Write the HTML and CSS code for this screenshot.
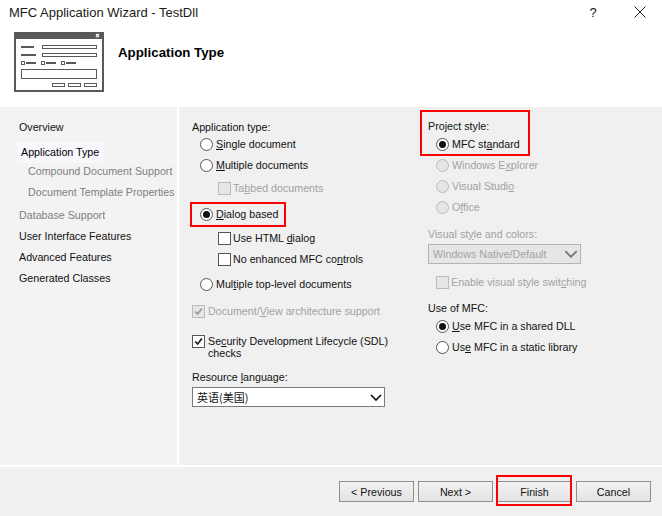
FILE: index.html
```html
<!DOCTYPE html>
<html lang="en">
<head>
<meta charset="utf-8">
<title>MFC Application Wizard - TestDll</title>
<link rel="stylesheet" href="styles.css">
</head>
<body>
<div class="window">
  <div class="titlebar">
    <span class="title">MFC Application Wizard - TestDll</span>
    <span class="help">?</span>
    <svg class="close" viewBox="0 0 12 12" width="12" height="12"><path d="M.5.5l11 11M11.5.5l-11 11" stroke="#222" fill="none"/></svg>
  </div>
  <div class="header">
    <svg class="logo" viewBox="0 0 90 60" width="90" height="60">
      <rect x="1" y="1" width="88" height="58" fill="#fff" stroke="#595959" stroke-width="2"/>
      <rect x="0" y="0" width="90" height="7" fill="#595959"/>
      <path d="M82 2l3 3M85 2l-3 3" stroke="#fff" stroke-width="1.2"/>
      <g fill="#595959">
        <rect x="7" y="14" width="13" height="2"/>
        <rect x="7" y="22" width="15" height="2"/>
        <rect x="12" y="30" width="10" height="2"/>
        <rect x="32" y="30" width="10" height="2"/>
        <rect x="52" y="30" width="10" height="2"/>
      </g>
      <g fill="none" stroke="#595959">
        <rect x="28.5" y="13.5" width="54" height="3"/>
        <rect x="28.5" y="21.5" width="54" height="3"/>
        <rect x="7.5" y="29.5" width="3" height="3"/>
        <rect x="27.5" y="29.5" width="3" height="3"/>
        <rect x="47.5" y="29.5" width="3" height="3"/>
        <rect x="7.5" y="37.5" width="75" height="9"/>
        <rect x="38.5" y="51.5" width="12" height="3"/>
        <rect x="54.5" y="51.5" width="12" height="3"/>
        <rect x="70.5" y="51.5" width="12" height="3"/>
      </g>
    </svg>
    <h1 class="heading">Application Type</h1>
  </div>
  <div class="middle">
    <nav class="sidebar">
      <div class="nav-item nav-overview">Overview</div>
      <div class="nav-item nav-current">Application Type</div>
      <div class="nav-item nav-sub">Compound Document Support</div>
      <div class="nav-item nav-sub nav-sub2">Document Template Properties</div>
      <div class="nav-item nav-dim nav-db">Database Support</div>
      <div class="nav-item nav-next">User Interface Features</div>
      <div class="nav-item nav-next">Advanced Features</div>
      <div class="nav-item nav-next">Generated Classes</div>
    </nav>
    <main class="main">
      <section class="col col-left">
        <div class="row"><span>Application type:</span></div>
        <div class="row opt mt1"><i class="radio"></i><span><u>S</u>ingle document</span></div>
        <div class="row opt mt5"><i class="radio"></i><span><u>M</u>ultiple documents</span></div>
        <div class="row sub off mt7"><i class="check"></i><span>Ta<u>b</u>bed documents</span></div>
        <div class="row opt mt10 marked"><i class="radio on"></i><span><u>D</u>ialog based</span><b class="red red-dialog"></b></div>
        <div class="row sub mt8"><i class="check"></i><span>Use HTML <u>d</u>ialog</span></div>
        <div class="row sub mt5"><i class="check"></i><span>No enhanced MFC co<u>n</u>trols</span></div>
        <div class="row opt mt9"><i class="radio"></i><span>Mul<u>t</u>iple top-level documents</span></div>
        <div class="row chk off mt11"><i class="check"><svg viewBox="0 0 13 13" width="11" height="11"><path d="M2.5 6.5l3 3 5-6.5" fill="none" stroke="#9a9a9a" stroke-width="2"/></svg></i><span>Document/<u>V</u>iew architecture support</span></div>
        <div class="row chk two mt16"><i class="check"><svg viewBox="0 0 13 13" width="11" height="11"><path d="M2.5 6.5l3 3 5-6.5" fill="none" stroke="#1a1a1a" stroke-width="2"/></svg></i><span>Se<u>c</u>urity Development Lifecycle (SDL) checks</span></div>
        <div class="row mt10"><span>Resource <u>l</u>anguage:</span></div>
        <div class="combo combo-lang mt2"><span class="cjk">英语(美国)</span><svg viewBox="0 0 12 7" width="12" height="7"><path d="M1 1l5 5 5-5" fill="none" stroke="#111" stroke-width="1.7"/></svg></div>
      </section>
      <section class="col col-right">
        <div class="row marked"><span>Project style:</span><b class="red red-project"></b></div>
        <div class="row opt2 mt2"><i class="radio on"></i><span>MFC st<u>a</u>ndard</span></div>
        <div class="row opt2 off mt5"><i class="radio"></i><span>Windows E<u>x</u>plorer</span></div>
        <div class="row opt2 off mt5"><i class="radio"></i><span>Visual Studi<u>o</u></span></div>
        <div class="row opt2 off mt5"><i class="radio"></i><span>O<u>f</u>fice</span></div>
        <div class="row off mt11"><span>Visual st<u>y</u>le and colors:</span></div>
        <div class="combo combo-style off mt2"><span>Windows Native/Default</span><svg viewBox="0 0 12 7" width="14" height="8"><path d="M1 1l5 5 5-5" fill="none" stroke="#777" stroke-width="1.6"/></svg></div>
        <div class="row opt2 off mt10"><i class="check"></i><span>Enable visual style swit<u>c</u>hing</span></div>
        <div class="row mt10"><span>Use of MFC:</span></div>
        <div class="row opt2 mt2"><i class="radio on"></i><span><u>U</u>se MFC in a shared DLL</span></div>
        <div class="row opt2 mt5"><i class="radio"></i><span>Us<u>e</u> MFC in a static library</span></div>
      </section>
    </main>
  </div>
  <footer class="footer">
    <button class="btn">&lt; Previous</button>
    <button class="btn">Next &gt;</button>
    <button class="btn marked">Finish<b class="red red-finish"></b></button>
    <button class="btn">Cancel</button>
  </footer>
</div>
</body>
</html>
```
FILE: styles.css
```css
* { box-sizing: border-box; }
html, body { margin: 0; padding: 0; }
body {
  background: #fff;
  font-family: "Liberation Sans", "Noto Sans CJK SC", sans-serif;
  font-size: 10.7px;
  color: #111;
}
.window { width: 662px; height: 516px; display: flex; flex-direction: column; overflow: hidden; background: #fff; }

.titlebar { height: 24px; flex: none; display: flex; align-items: center; padding-left: 9px; }
.title { font-size: 13px; flex: 1; color: #1a1a1a; }
.help { font-size: 13px; width: 12px; margin-right: 35px; text-align: center; }
.close { margin-right: 16px; }

.header { height: 83px; flex: none; display: flex; padding: 8px 0 0 14px; }
.logo { flex: none; }
.heading { margin: 12px 0 0 14px; font-size: 13.3px; font-weight: 700; line-height: 18px; color: #000; }

.middle { height: 360px; flex: none; display: flex; border-bottom: 2px solid #fff; }
.sidebar { width: 177px; flex: none; background: #f3f3f3; padding: 12px 0 0 19px; }
.nav-item { height: 16px; line-height: 16px; white-space: nowrap; }
.nav-current { width: 87px; height: 21px; line-height: 21px; margin: 7px 0 0 -2px; padding-left: 4px; background: #f8f8fc; color: #000; }
.nav-sub { margin: 0 0 0 9px; color: #808080; }
.nav-sub2 { margin-top: 5px; }
.nav-dim { color: #808080; }
.nav-db { margin-top: 7px; }
.nav-next { margin-top: 5px; }

.main { flex: 1; margin-left: 2px; background: #f0f0f0; display: flex; }
.col { flex: none; }
.col-left { width: 249px; padding: 12px 0 0 13px; }
.col-right { width: 200px; padding-top: 11px; }

.row { height: 16px; line-height: 16px; display: flex; align-items: center; white-space: nowrap; position: relative; width: max-content; }
.opt { padding-left: 8px; }
.opt2 { padding-left: 8px; }
.sub { padding-left: 26px; }
.chk { padding-left: 0; }
.two { height: 24px; line-height: 12px; align-items: flex-start; white-space: normal; width: 205px; }
.two .check { margin-right: 4px; }
.two span { flex: 1; }
.off { color: #a2a2a2; }

.mt1 { margin-top: 1px; }
.mt2 { margin-top: 2px; }
.mt5 { margin-top: 5px; }
.mt7 { margin-top: 7px; }
.mt8 { margin-top: 8px; }
.mt9 { margin-top: 9px; }
.mt10 { margin-top: 10px; }
.mt11 { margin-top: 11px; }
.mt16 { margin-top: 16px; }

.radio { flex: none; width: 13px; height: 13px; margin-right: 3px; border: 1px solid #555; border-radius: 50%; background: #fff; display: flex; align-items: center; justify-content: center; }
.radio.on::after { content: ""; width: 7px; height: 7px; border-radius: 50%; background: #111; }
.off .radio { border-color: #bcbcbc; background: #e6e6e6; }
.check { flex: none; width: 13px; height: 13px; margin-right: 2px; border: 1px solid #555; background: #fff; display: flex; align-items: center; justify-content: center; }
.chk .check { margin-right: 3px; }
.off .check { border-color: #bcbcbc; background: #e6e6e6; }

.combo { display: flex; align-items: center; justify-content: space-between; height: 20px; border: 1px solid #7a7a7a; background: #fff; padding: 0 2px 0 4px; }
.combo-lang { width: 193px; font-size: 11px; }
.combo-style { width: 153px; background: #e6e6e6; border-color: #b4b4b4; padding-right: 2px; }
.cjk { font-family: "Noto Sans CJK SC", sans-serif; }

.footer { flex: 1; background: #f0f0f0; display: flex; justify-content: flex-end; align-items: flex-start; gap: 4px; padding: 14px 11px 0 0; }
.btn { position: relative; width: 75px; height: 21px; padding: 0; border: 1px solid #8f8f8f; background: linear-gradient(#f2f2f2, #e3e3e3); font: inherit; color: #111; }

.marked { position: relative; }
.red { position: absolute; border: 2px solid #f00; pointer-events: none; }
.red-dialog { left: -2px; top: -4px; width: 96px; height: 25px; }
.red-project { left: -8px; top: -8px; width: 110px; height: 46px; }
.red-finish { left: -2px; top: -7px; width: 76px; height: 31px; }
```
